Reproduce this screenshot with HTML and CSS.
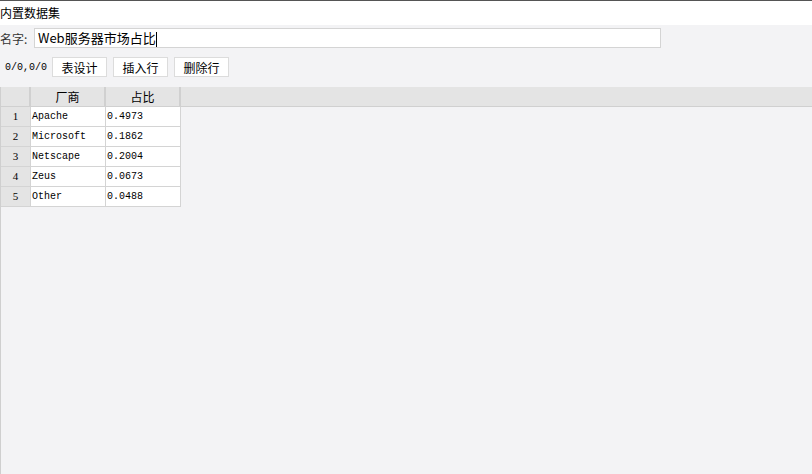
FILE: index.html
```html
<!DOCTYPE html>
<html lang="zh-CN">
<head>
  <meta charset="UTF-8">
  <title>内置数据集</title>
  <link rel="stylesheet" href="styles.css">
</head>
<body>
  <div class="title-bar">内置数据集</div>

  <div class="panel">
    <div class="name-row">
      <label class="name-label">名字:</label>
      <div class="name-input">Web服务器市场占比<span class="caret"></span></div>
    </div>

    <div class="toolbar">
      <span class="pos">0/0,0/0</span>
      <button class="btn">表设计</button>
      <button class="btn">插入行</button>
      <button class="btn">删除行</button>
    </div>

    <div class="grid">
      <div class="grid-head">
        <div class="hcell corner"></div>
        <div class="hcell">厂商</div>
        <div class="hcell">占比</div>
      </div>
      <div class="grid-row">
        <div class="rnum">1</div><div class="cell">Apache</div><div class="cell">0.4973</div>
      </div>
      <div class="grid-row">
        <div class="rnum">2</div><div class="cell">Microsoft</div><div class="cell">0.1862</div>
      </div>
      <div class="grid-row">
        <div class="rnum">3</div><div class="cell">Netscape</div><div class="cell">0.2004</div>
      </div>
      <div class="grid-row">
        <div class="rnum">4</div><div class="cell">Zeus</div><div class="cell">0.0673</div>
      </div>
      <div class="grid-row">
        <div class="rnum">5</div><div class="cell">Other</div><div class="cell">0.0488</div>
      </div>
    </div>
  </div>
</body>
</html>
```

FILE: styles.css
```css
body {
    margin: 0;
    height: 474px;
    overflow: hidden;
    font-family: "Noto Sans CJK SC", "Noto Sans", sans-serif;
    font-size: 12px;
    color: #000;
    background-color: #f3f3f5;
    border-top: 1px solid #555;
    box-sizing: border-box;
}

.title-bar {
    height: 24px;
    line-height: 24px;
    background-color: #fff;
}

.name-row {
    display: flex;
    align-items: center;
    height: 24px;
    margin-top: 1px;
}

.name-label {
    width: 34px;
    color: #333;
}

.name-input {
    width: 622px;
    height: 18px;
    line-height: 18px;
    border: 1px solid #d4d4d4;
    background-color: #fff;
    padding-left: 3px;
    box-sizing: content-box;
    font-size: 13px;
}

.caret {
    display: inline-block;
    width: 1px;
    height: 15px;
    background-color: #000;
    vertical-align: middle;
}

.toolbar {
    display: flex;
    align-items: center;
    gap: 6px;
    height: 22px;
    margin-top: 6px;
    padding-left: 5px;
}

.pos {
    font-family: "Liberation Mono", monospace;
    font-size: 10px;
    width: 41px;
}

.btn {
    width: 55px;
    height: 20px;
    padding: 0;
    border: 1px solid #dcdcdc;
    background-color: #fff;
    font-family: "Noto Sans CJK SC", sans-serif;
    font-size: 12px;
    color: #000;
}

.grid {
    margin-top: 9px;
    border-left: 1px solid #cfcfcf;
    height: 400px;
}

.grid-head {
    display: flex;
    height: 19px;
    background-color: #e4e4e4;
    border-bottom: 1px solid #d0d0d0;
}

.hcell {
    width: 73px;
    text-align: center;
    line-height: 19px;
    border-right: 2px solid #d0d0d0;
}

.hcell.corner {
    width: 28px;
}

.grid-row {
    display: flex;
    height: 20px;
}

.rnum {
    width: 29px;
    background-color: #e4e4e4;
    border-bottom: 1px solid #d4d4d4;
    text-align: center;
    line-height: 19px;
    font-family: "Liberation Serif", serif;
    font-size: 11px;
}

.cell {
    width: 73px;
    padding-left: 1px;
    background-color: #fff;
    border-left: 1px solid #d4d4d4;
    border-bottom: 1px solid #d4d4d4;
    line-height: 19px;
    font-family: "Liberation Mono", monospace;
    font-size: 10px;
}

.cell:last-child {
    border-right: 1px solid #d4d4d4;
}
```
